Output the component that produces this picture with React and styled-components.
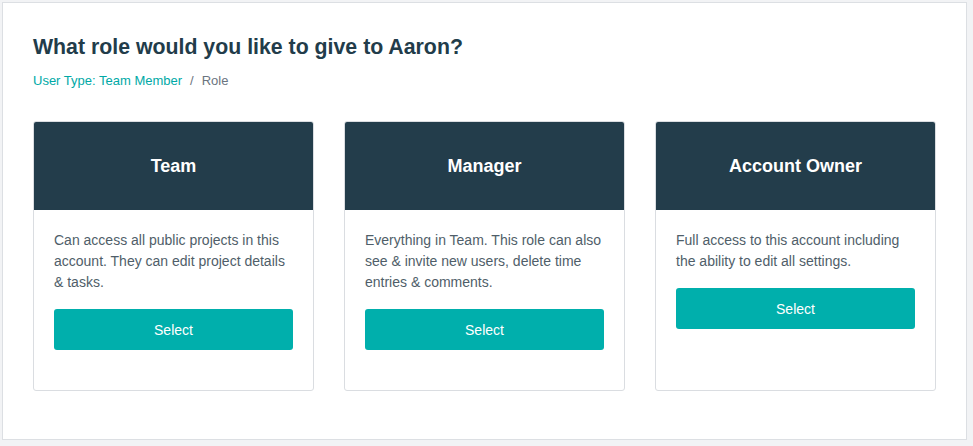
import React from "react";
import styled, { createGlobalStyle } from "styled-components";

const GlobalStyle = createGlobalStyle`
  html, body {
    margin: 0;
    padding: 0;
    background: #f2f3f5;
    font-family: "Liberation Sans", Arial, Helvetica, sans-serif;
  }
`;

const Page = styled.div`
  padding: 2px 6px 6px 2px;
`;

const Panel = styled.div`
  background: #fff;
  border: 1px solid #dcdfe3;
  height: 438px;
  box-sizing: border-box;
  padding: 32px 30px 0 30px;
`;

const Title = styled.h1`
  margin: 0;
  font-size: 21.3px;
  font-weight: 700;
  color: #223c4a;
  line-height: 24px;
`;

const Breadcrumb = styled.div`
  margin-top: 14px;
  font-size: 13px;
  line-height: 16px;
  color: #6b7480;
  display: flex;
  gap: 8px;
`;

const Crumb = styled.span`
  color: ${(props) => (props.active ? "#00a9a6" : "#6b7480")};
`;

const Cards = styled.div`
  margin-top: 32px;
  display: grid;
  grid-template-columns: repeat(3, 281px);
  gap: 30px;
  align-items: stretch;
`;

const Card = styled.div`
  border: 1px solid #dadde1;
  border-radius: 3px;
  overflow: hidden;
  display: flex;
  flex-direction: column;
`;

const CardHead = styled.div`
  background: #233d4b;
  color: #fff;
  height: 88px;
  display: flex;
  align-items: center;
  justify-content: center;
  font-size: 18px;
  font-weight: 700;
`;

const CardBody = styled.div`
  padding: 20px 20px 40px 20px;
`;

const Desc = styled.p`
  margin: 0;
  font-size: 14px;
  line-height: 21px;
  color: #4f5e69;
`;

const SelectButton = styled.button`
  margin-top: 16px;
  width: 100%;
  height: 41px;
  border: none;
  border-radius: 3px;
  background: #00afac;
  color: #fff;
  font-family: inherit;
  font-size: 14px;
  cursor: pointer;
`;

const roles = [
  {
    name: "Team",
    desc: "Can access all public projects in this account. They can edit project details & tasks.",
  },
  {
    name: "Manager",
    desc: "Everything in Team. This role can also see & invite new users, delete time entries & comments.",
  },
  {
    name: "Account Owner",
    desc: "Full access to this account including the ability to edit all settings.",
  },
];

export default function App() {
  return (
    <>
      <GlobalStyle />
      <Page>
        <Panel>
          <Title>What role would you like to give to Aaron?</Title>
          <Breadcrumb>
            <Crumb active>User Type: Team Member</Crumb>
            <Crumb>/</Crumb>
            <Crumb>Role</Crumb>
          </Breadcrumb>
          <Cards>
            {roles.map((role) => (
              <Card key={role.name}>
                <CardHead>{role.name}</CardHead>
                <CardBody>
                  <Desc>{role.desc}</Desc>
                  <SelectButton>Select</SelectButton>
                </CardBody>
              </Card>
            ))}
          </Cards>
        </Panel>
      </Page>
    </>
  );
}
